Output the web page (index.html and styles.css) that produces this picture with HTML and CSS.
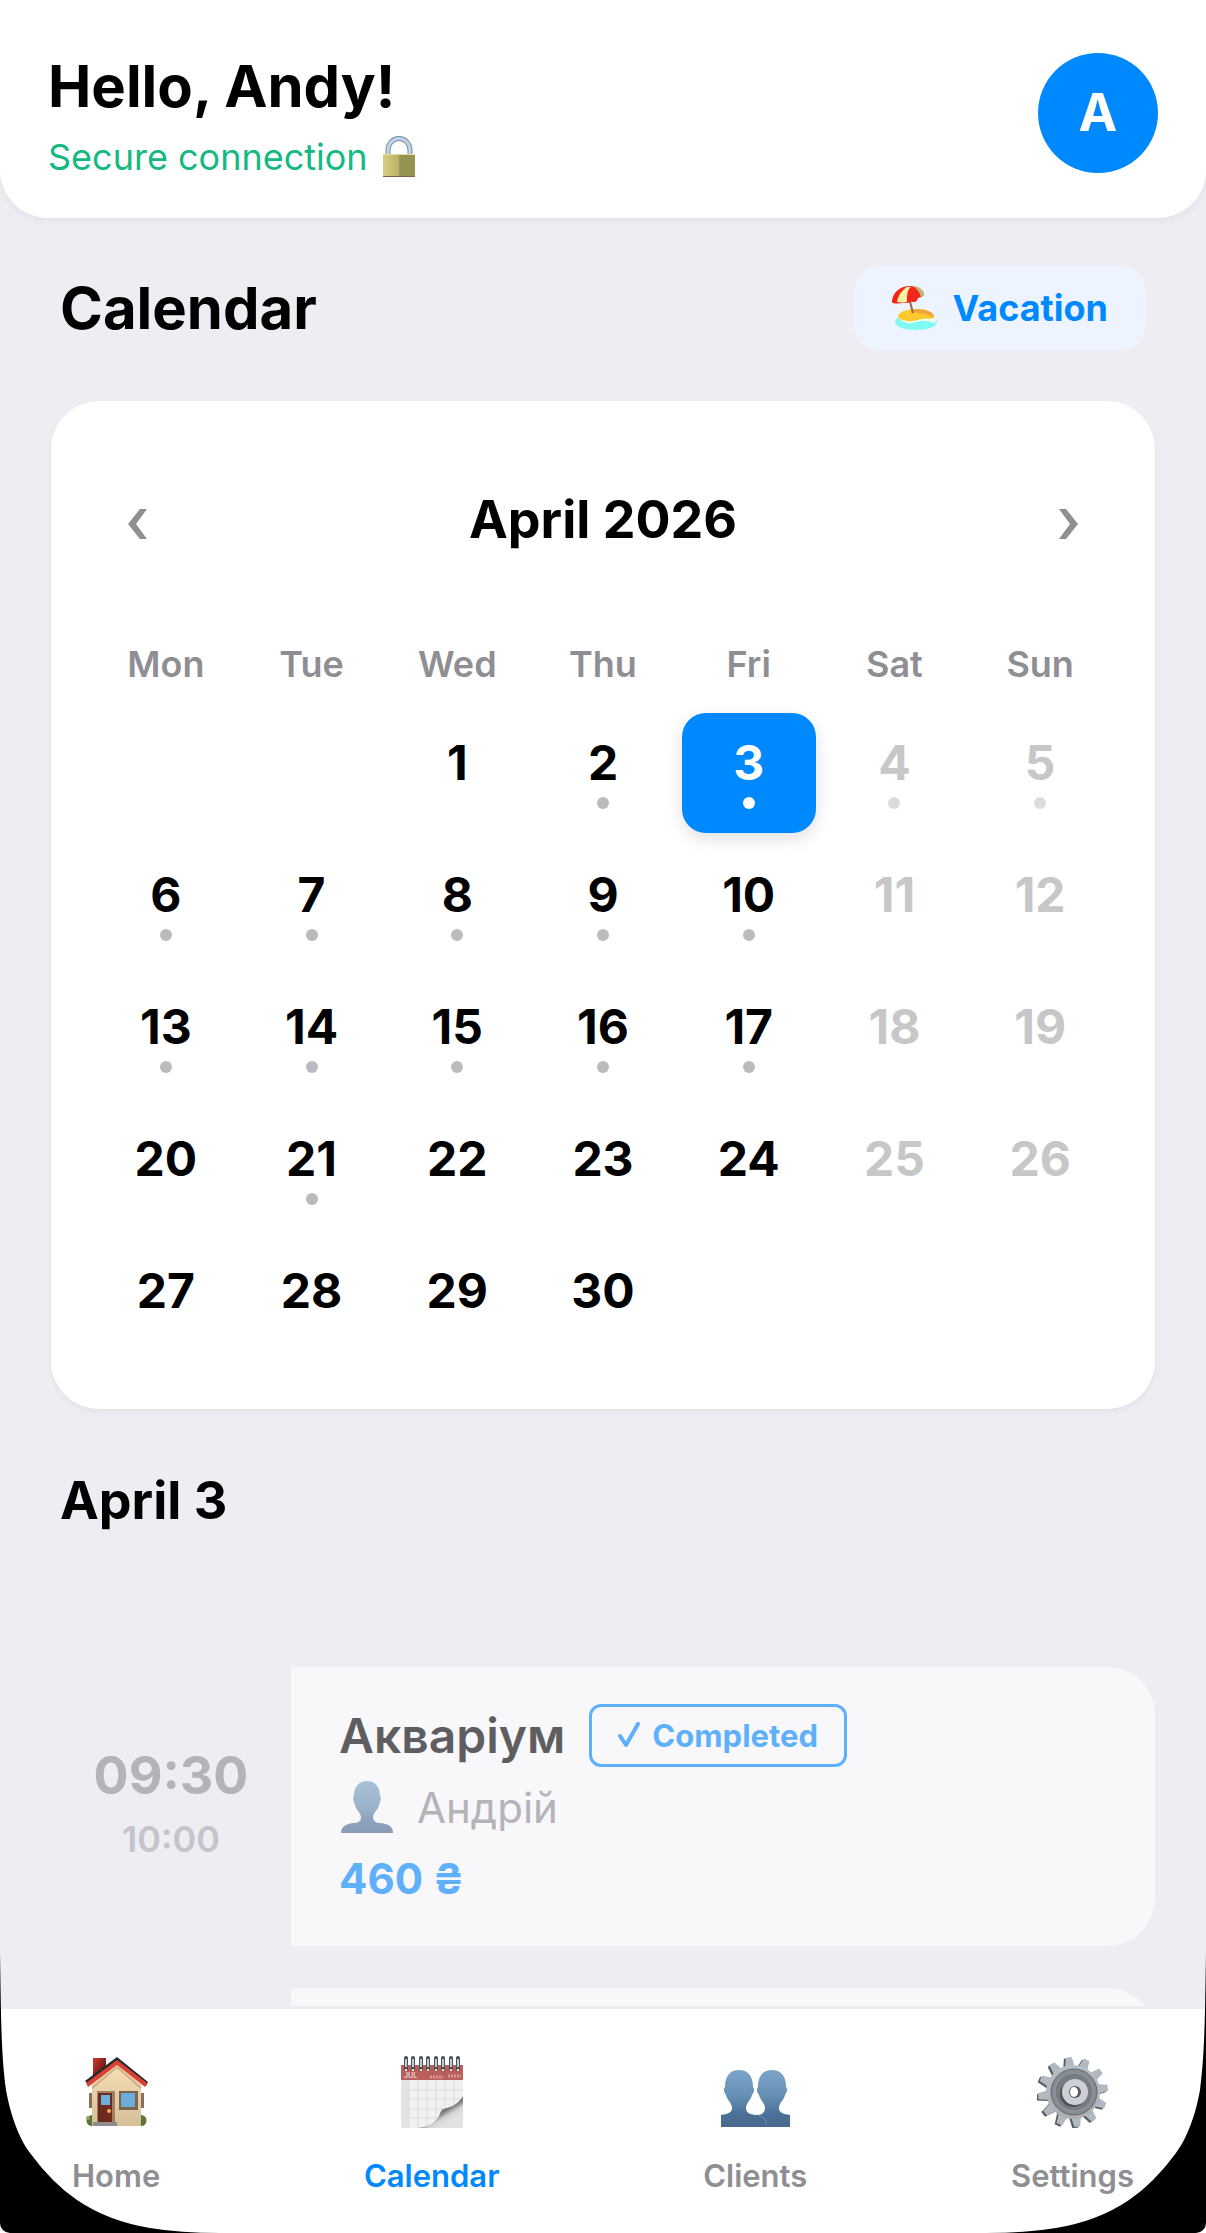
FILE: index.html
```html
<!DOCTYPE html>
<html lang="en">

<head>
    <meta charset="UTF-8">
    <meta name="viewport" content="width=device-width, initial-scale=1.0">
    <title>Calendar</title>
    <link rel="stylesheet" href="styles.css">
</head>

<body>
    <header class="header">
        <div>
            <h1 class="hello">Hello, Andy!</h1>
            <p class="secure">Secure connection
                <svg class="lock-icon" viewBox="0 0 34 42" aria-hidden="true">
                    <defs>
                        <linearGradient id="brass">
                            <stop offset="0" stop-color="#d6cf7e" />
                            <stop offset="0.5" stop-color="#b9b163" />
                            <stop offset="0.52" stop-color="#989155" />
                            <stop offset="1" stop-color="#94954f" />
                        </linearGradient>
                    </defs>
                    <path d="M6 19V14a11 11.500 0 0 1 22 0v5" fill="none" stroke="#7d8792" stroke-width="5" />
                    <path d="M6 19V14a11 11.500 0 0 1 22 0v5" fill="none" stroke="#bcd5ee" stroke-width="3" />
                    <rect x="1" y="18" width="32" height="23" rx="1" fill="url(#brass)" />
                    <path d="M1 18.500h32" stroke="#e6dc9b" />
                    <path d="M1 40.500h32" stroke="#80604a" />
                </svg>
            </p>
        </div>
        <div class="avatar">A</div>
    </header>

    <main class="content">
        <div class="page-head">
            <h2>Calendar</h2>
            <button type="button" class="vacation">
                <svg class="beach-icon" viewBox="0 0 46 44" aria-hidden="true">
                    <ellipse cx="24" cy="36" rx="21" ry="8" fill="#7ffaf0" />
                    <path d="M5 31q8 8 16 6q8-4 22 0q2-4-1-7z" fill="#eefcf2" />
                    <path d="M6 30c2-5 10-7 18-7 10 0 18 3 18 8 0 3-6 1-12 2s-9 3-15 2-9-2-9-5z" fill="#fdc92f" />
                    <path d="M24 23c10 0 18 3 18 8-6-2-10-4-22-5z" fill="#f0a33a" />
                    <path d="M17 12l4 15" stroke="#94653f" stroke-width="2" />
                    <path d="M0 14C2 5 9 0 18 0s14 4 14 9q-3 3-6 3-1 4-4 4-4-1-6 1-4 0-6 0-6 1-9 0-2-1-1-3z" fill="#f3261b" />
                    <path d="M15 1C9 5 6 10 5 16q5 1 10 0C15 9 15 4 19 1z" fill="#fff0a0" />
                    <path d="M20 0c5 2 8 7 9 11q4-1 3-4C30 3 26 0 20 0z" fill="#bfb974" />
                </svg>
                Vacation
            </button>
        </div>

        <section class="calendar">
            <div class="month">
                <button type="button" class="month-arrow" aria-label="Previous month">
                    <svg viewBox="0 0 20 30"><path d="M12 0h7L8 15l11 15h-7L0 15z" fill="currentColor" /></svg>
                </button>
                <h3>April 2026</h3>
                <button type="button" class="month-arrow" aria-label="Next month">
                    <svg viewBox="0 0 20 30"><path d="M8 0H1l11 15L1 30h7l12-15z" fill="currentColor" /></svg>
                </button>
            </div>
            <div class="grid weekdays">
                <span>Mon</span>
                <span>Tue</span>
                <span>Wed</span>
                <span>Thu</span>
                <span>Fri</span>
                <span>Sat</span>
                <span>Sun</span>
            </div>
            <div class="grid days">
                <button type="button" class="day first">1</button>
                <button type="button" class="day busy">2</button>
                <button type="button" class="day busy selected">3</button>
                <button type="button" class="day busy weekend">4</button>
                <button type="button" class="day busy weekend">5</button>
                <button type="button" class="day busy">6</button>
                <button type="button" class="day busy">7</button>
                <button type="button" class="day busy">8</button>
                <button type="button" class="day busy">9</button>
                <button type="button" class="day busy">10</button>
                <button type="button" class="day weekend">11</button>
                <button type="button" class="day weekend">12</button>
                <button type="button" class="day busy">13</button>
                <button type="button" class="day busy">14</button>
                <button type="button" class="day busy">15</button>
                <button type="button" class="day busy">16</button>
                <button type="button" class="day busy">17</button>
                <button type="button" class="day weekend">18</button>
                <button type="button" class="day weekend">19</button>
                <button type="button" class="day">20</button>
                <button type="button" class="day busy">21</button>
                <button type="button" class="day">22</button>
                <button type="button" class="day">23</button>
                <button type="button" class="day">24</button>
                <button type="button" class="day weekend">25</button>
                <button type="button" class="day weekend">26</button>
                <button type="button" class="day">27</button>
                <button type="button" class="day">28</button>
                <button type="button" class="day">29</button>
                <button type="button" class="day">30</button>
            </div>
        </section>

        <h3 class="day-title">April 3</h3>

        <div class="visits">
            <article class="visit">
                <div class="visit-time">
                    <span class="time-from">09:30</span>
                    <span class="time-to">10:00</span>
                </div>
                <div class="visit-info">
                    <div class="visit-name">
                        <h4>Акваріум</h4>
                        <span class="badge">
                            <svg class="check-icon" viewBox="0 0 22 26" aria-hidden="true">
                                <path d="M2 14l6 9L20 2" fill="none" stroke="currentColor" stroke-width="4" stroke-linecap="round" stroke-linejoin="round" />
                            </svg>
                            Completed
                        </span>
                    </div>
                    <div class="visit-client">
                        <svg class="person-icon" viewBox="0 0 54 54" aria-hidden="true">
                            <path d="M28 1c-8 0-13 6-13 15-2 2 0 6 1 9 1 5 6 8 6 12 0 5-4 6-8 6-8 1-12 4-12 10h52c0-6-4-9-12-10-4 0-8-1-8-6 0-4 5-7 6-12 1-3 3-7 1-9 0-9-5-15-13-15z" fill="url(#blue)" />
                        </svg>
                        Андрій
                    </div>
                    <div class="visit-price">460 ₴</div>
                </div>
            </article>
            <article class="visit">
                <div class="visit-time"></div>
                <div class="visit-info"></div>
            </article>
        </div>
    </main>

    <nav class="tabs">
        <a href="#home" class="tab">
            <svg class="tab-icon" viewBox="0 0 72 72" aria-hidden="true">
                <defs>
                    <linearGradient id="wall" x2="0" y2="1">
                        <stop offset="0" stop-color="#f8dfb4" />
                        <stop offset="1" stop-color="#d3bf98" />
                    </linearGradient>
                    <linearGradient id="brick" x2="1" y2="1">
                        <stop offset="0" stop-color="#d6382f" />
                        <stop offset="1" stop-color="#3d0f0c" />
                    </linearGradient>
                </defs>
                <path d="M9 37h3v15H9zM61 37h3v15h-3z" fill="#8a7058" />
                <rect x="13" y="2" width="13" height="20" fill="url(#brick)" />
                <path d="M12 28L37 8l24 20v42H12z" fill="url(#wall)" />
                <path d="M12 32L37 11l24 21" fill="none" stroke="#a98862" stroke-width="2" opacity="0.5" />
                <path d="M5 25L37 1l31 25-2 4-29-23L9 29z" fill="#242a2c" />
                <path d="M6 27L37 4l30 23-2 4-28-22L8 31z" fill="#da4034" />
                <rect x="17" y="35" width="18" height="31" fill="#a2805f" />
                <rect x="18" y="37" width="14" height="29" fill="#6d2a1e" />
                <rect x="21" y="39" width="9" height="10" fill="#6cb0da" />
                <circle cx="29" cy="55" r="2" fill="#f5b04d" />
                <rect x="39" y="35" width="19" height="19" fill="#7b654f" />
                <rect x="41" y="37" width="14" height="14" fill="#6cacd8" />
                <path d="M13 66h24v4H13z" fill="#8e8d8b" />
                <path d="M12 59a5 5 0 1 0 0 11z" fill="#5e7437" />
                <path d="M61 59a5 5 0 0 1 0 11z" fill="#5e7437" />
                <circle cx="8" cy="62" r="2" fill="#92a65c" />
            </svg>
            Home
        </a>
        <a href="#calendar" class="tab active">
            <svg class="tab-icon" viewBox="0 0 72 72" aria-hidden="true">
                <defs>
                    <linearGradient id="curl" x1="0.2" y1="0.2" x2="0.7" y2="0.8">
                        <stop offset="0" stop-color="#ffffff" />
                        <stop offset="0.45" stop-color="#dddddd" />
                        <stop offset="0.58" stop-color="#707070" />
                        <stop offset="0.8" stop-color="#d4d4d4" />
                        <stop offset="1" stop-color="#e2e2e2" />
                    </linearGradient>
                </defs>
                <rect x="5" y="10" width="62" height="62" fill="#f1f1f1" />
                <path d="M5 24h8v48H5z" fill="#e4e4e4" />
                <path d="M13 24v48M22 24v48M31 24v48M40 24v48M49 24v48M58 24v48M5 34h62M5 43h62M5 53h62M5 62h62" stroke="#dcdcdc" />
                <path d="M22 72c17-2 20-9 24-19 7-1 17-4 21-14v33z" fill="url(#curl)" />
                <rect x="5" y="9" width="62" height="15" fill="#b9605f" />
                <text x="8" y="22" class="cal-text">JUL</text>
                <path d="M34 21h13M52 20h13" stroke="#d79795" stroke-width="3" stroke-dasharray="2 1" />
                <path d="M10 13v-11M17 13v-11M25 13v-11M32 13v-11M40 13v-11M47 13v-11M55 13v-11M62 13v-11" stroke="#4b4f50" stroke-width="4" stroke-linecap="round" />
                <path d="M10 11v-8M17 11v-8M25 11v-8M32 11v-8M40 11v-8M47 11v-8M55 11v-8M62 11v-8" stroke="#b9cfdd" stroke-width="2" />
                <path d="M9 14h2M16 14h2M24 14h2M31 14h2M39 14h2M46 14h2M54 14h2M61 14h2" stroke="#e8dfcf" stroke-width="2" />
            </svg>
            Calendar
        </a>
        <a href="#clients" class="tab">
            <svg class="tab-icon" viewBox="0 0 72 72" aria-hidden="true">
                <defs>
                    <linearGradient id="blue" x2="0" y2="1">
                        <stop offset="0" stop-color="#7aa5c8" />
                        <stop offset="0.45" stop-color="#6690b4" />
                        <stop offset="0.8" stop-color="#4a6f96" />
                        <stop offset="1" stop-color="#4a698c" />
                    </linearGradient>
                </defs>
                <path d="M53 14c-9 0-14 6-14 17-2 2-1 5 1 8 1 5 6 8 6 13 0 4-3 7-8 7v12h33V59c-6-1-11-2-11-7s5-8 6-13c2-3 3-6 1-8 0-11-5-17-14-17z" fill="url(#blue)" />
                <path d="M20 14c-9 0-14 6-14 17-2 2-1 5 1 8 1 5 6 8 6 13s-5 6-11 7v12h45c0-8-3-10-9-12-6 0-11-2-11-7s5-8 6-13c2-3 3-6 1-8 0-11-5-17-14-17z" fill="url(#blue)" />
                <path d="M38 59c6 1 9 4 9 10" fill="none" stroke="#6793b8" />
            </svg>
            Clients
        </a>
        <a href="#settings" class="tab">
            <svg class="tab-icon" viewBox="0 0 72 72" aria-hidden="true">
                <defs>
                    <linearGradient id="steel" x2="0" y2="1">
                        <stop offset="0" stop-color="#b3bfca" />
                        <stop offset="1" stop-color="#b0aeb3" />
                    </linearGradient>
                    <g id="teeth">
                        <path id="tooth" d="M31 12L33 1h6l2 11v48l-2 11h-6l-2-11z" />
                        <use href="#tooth" transform="rotate(30 36 36)" />
                        <use href="#tooth" transform="rotate(60 36 36)" />
                        <use href="#tooth" transform="rotate(90 36 36)" />
                        <use href="#tooth" transform="rotate(120 36 36)" />
                        <use href="#tooth" transform="rotate(150 36 36)" />
                    </g>
                </defs>
                <use href="#teeth" transform="rotate(-7 36 36) translate(-2 1)" fill="#555a60" />
                <use href="#teeth" transform="rotate(-7 36 36)" fill="#b1b8c0" />
                <circle cx="36" cy="36" r="27" fill="url(#steel)" />
                <circle cx="37" cy="36" r="23" fill="#858b91" stroke="#62676c" />
                <circle cx="37" cy="36" r="19" fill="#757c82" stroke="#969da3" />
                <circle cx="36" cy="38" r="13" fill="#4c5156" />
                <circle cx="38" cy="36" r="13" fill="#cdd0d6" />
                <circle cx="38" cy="36" r="6" fill="#5d5a59" />
                <ellipse cx="37" cy="36" rx="4" ry="5" fill="#ffffff" />
            </svg>
            Settings
        </a>
    </nav>

    <!-- rounded corners of the phone screen -->
    <svg class="corner corner-left" viewBox="0 0 220 280" aria-hidden="true">
        <path d="M0 0C1 60 1 100 6 137C12 170 22 189 30 200Q52 230 77 247Q108 268 150 275Q180 280 220 280H10A10 10 0 0 1 0 270z" />
    </svg>
    <svg class="corner corner-right" viewBox="0 0 220 280" aria-hidden="true">
        <path d="M220 0C219 60 219 100 214 137C208 170 198 189 190 200Q168 230 143 247Q112 268 70 275Q40 280 0 280H210A10 10 0 0 0 220 270z" />
    </svg>
</body>

</html>
```

FILE: styles.css
```css
* {
    box-sizing: border-box;
}

body {
    margin: 0;
    height: 100vh;
    display: flex;
    flex-direction: column;
    overflow: hidden;
    background-color: #eeedf3;
    color: #000;
    font-family: Inter, "Liberation Sans", sans-serif;
}

h1,
h2,
h3,
h4,
p {
    margin: 0;
}

button {
    border: none;
    padding: 0;
    background: none;
    color: inherit;
    font-family: inherit;
    cursor: pointer;
}

/* header */
.header {
    display: flex;
    justify-content: space-between;
    align-items: flex-start;
    padding: 53px 48px 34px;
    background-color: #fff;
    border-radius: 0 0 48px 48px;
    box-shadow: 0 3px 9px rgba(0, 0, 0, 0.05);
}

.hello,
.page-head h2 {
    font-size: 58px;
    line-height: 66px;
    font-weight: 700;
}

.secure {
    display: flex;
    align-items: center;
    gap: 14px;
    margin-top: 11px;
    color: #14b981;
    font-size: 36px;
    line-height: 54px;
}

.lock-icon {
    width: 34px;
    height: 42px;
}

.avatar {
    width: 120px;
    height: 120px;
    border-radius: 50%;
    background-color: #0088ff;
    color: #fff;
    font-size: 52px;
    line-height: 120px;
    font-weight: 700;
    text-align: center;
}

/* calendar */
.content {
    flex: 1;
    min-height: 0;
    overflow: hidden;
    padding: 48px 51px 0;
}

.page-head {
    display: flex;
    justify-content: space-between;
    align-items: center;
    padding: 0 9px;
    margin-bottom: 51px;
}

.vacation {
    display: flex;
    align-items: center;
    gap: 14px;
    height: 84px;
    padding: 0 38px;
    border-radius: 24px;
    background-color: #edf4ff;
    color: #0088ff;
    font-size: 36px;
    font-weight: 700;
}

.beach-icon {
    width: 46px;
    height: 44px;
}

.calendar {
    padding: 48px;
    background-color: #fff;
    border-radius: 48px;
    box-shadow: 0 3px 6px rgba(0, 0, 0, 0.05);
}

.month {
    display: flex;
    justify-content: space-between;
    align-items: center;
    height: 142px;
    margin-bottom: 51px;
}

.month h3,
.day-title {
    font-size: 52px;
    line-height: 66px;
    font-weight: 700;
}

.month-arrow {
    width: 78px;
    height: 78px;
    padding-top: 10px;
    color: #8e8e93;
}

.month-arrow svg {
    width: 20px;
    height: 30px;
}

.grid {
    display: grid;
    grid-template-columns: repeat(7, 1fr);
    gap: 12px;
}

.weekdays {
    margin-bottom: 27px;
    color: #8e8e93;
    font-size: 36px;
    line-height: 44px;
    font-weight: 600;
    text-align: center;
}

.day {
    display: flex;
    flex-direction: column;
    align-items: center;
    height: 120px;
    padding-top: 22px;
    border-radius: 24px;
    font-size: 48px;
    line-height: 56px;
    font-weight: 700;
}

.day.first {
    grid-column: 3;
}

.day.busy::after {
    content: "";
    width: 12px;
    height: 12px;
    margin-top: 6px;
    border-radius: 50%;
    background-color: #bbbbbf;
}

.day.weekend {
    color: #c7c7c9;
}

.day.weekend::after {
    background-color: #dcdcde;
}

.day.selected {
    background-color: #0088ff;
    color: #fff;
    box-shadow: 0 6px 18px rgba(0, 0, 0, 0.12);
}

.day.selected::after {
    background-color: #fff;
}

.day-title {
    margin: 59px 0 133px;
    padding: 0 9px;
}

/* visits */
.visits {
    display: flex;
    flex-direction: column;
    gap: 42px;
}

.visit {
    display: flex;
    min-height: 279px;
    border-radius: 48px;
    background-color: #fff;
    opacity: 0.6;
    overflow: hidden;
}

.visit-time {
    display: flex;
    flex-direction: column;
    align-items: center;
    justify-content: center;
    width: 240px;
    padding-bottom: 3px;
    background-color: #eeedf3;
    color: #8e8e93;
}

.time-from {
    font-size: 52px;
    line-height: 68px;
    font-weight: 700;
}

.time-to {
    font-size: 36px;
    line-height: 58px;
    font-weight: 600;
    opacity: 0.7;
}

.visit-info {
    flex: 1;
    padding: 32px 48px 31px;
}

.visit-name,
.visit-client {
    display: flex;
    align-items: center;
    height: 72px;
}

.visit-name {
    gap: 24px;
}

.visit-name h4 {
    font-size: 48px;
    font-weight: 600;
}

.badge {
    display: flex;
    align-items: center;
    gap: 12px;
    height: 63px;
    padding: 0 26px;
    border: 3px solid #0088ff;
    border-radius: 12px;
    color: #0088ff;
    font-size: 31px;
    font-weight: 700;
}

.check-icon {
    width: 22px;
    height: 26px;
}

.visit-client {
    gap: 24px;
    color: #8e8e93;
    font-size: 42px;
}

.person-icon {
    width: 54px;
    height: 54px;
}

.visit-price {
    color: #0088ff;
    font-size: 42px;
    line-height: 72px;
    font-weight: 700;
}

/* bottom tabs */
.tabs {
    display: flex;
    justify-content: space-between;
    padding: 47px 72px 37px;
    border-top: 3px solid #ededf1;
    background-color: #fff;
}

.tab {
    display: flex;
    flex-direction: column;
    align-items: center;
    gap: 28px;
    color: #8e8e93;
    font-size: 31px;
    line-height: 40px;
    font-weight: 600;
    text-decoration: none;
}

.tab.active {
    color: #0088ff;
}

.tab-icon {
    width: 72px;
    height: 72px;
}

.cal-text {
    font-size: 7px;
    fill: #f0d4d2;
}

.corner {
    position: fixed;
    bottom: 0;
    width: 220px;
    height: 280px;
    pointer-events: none;
}

.corner-left {
    left: 0;
}

.corner-right {
    right: 0;
}
```
